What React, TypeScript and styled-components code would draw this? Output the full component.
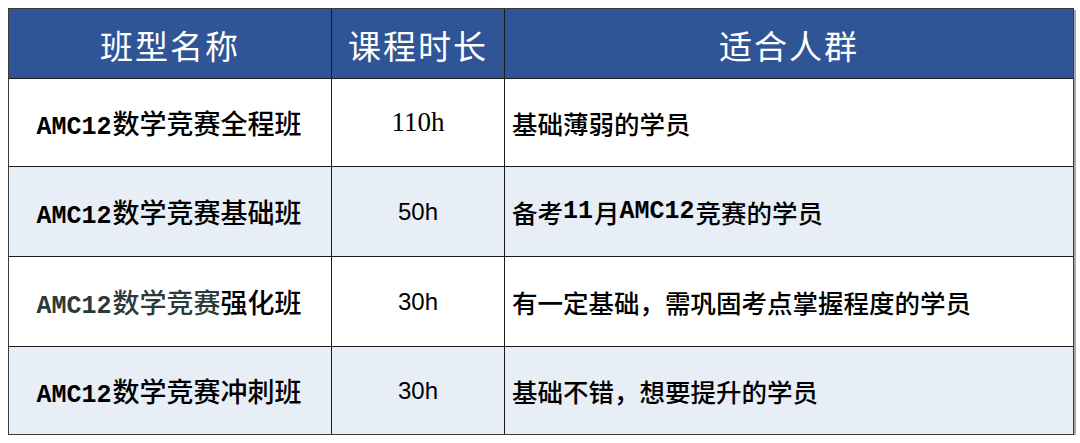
import styled, { createGlobalStyle } from "styled-components";

const GlobalStyle = createGlobalStyle`
  body {
    margin: 0;
    padding: 8px 0 0 8px;
    background: #ffffff;
    font-family: "Liberation Serif", "Noto Sans CJK SC", serif;
  }
`;

type Course = {
  name: string;
  dimPrefix?: boolean;
  hours: string;
  hoursSans?: boolean;
  audience: string;
};

const courses: Course[] = [
  { name: "全程班", hours: "110h", audience: "基础薄弱的学员" },
  { name: "基础班", hours: "50h", hoursSans: true, audience: "备考11月AMC12竞赛的学员" },
  {
    name: "强化班",
    dimPrefix: true,
    hours: "30h",
    hoursSans: true,
    audience: "有一定基础，需巩固考点掌握程度的学员",
  },
  { name: "冲刺班", hours: "30h", hoursSans: true, audience: "基础不错，想要提升的学员" },
];

const App: React.FC = () => {
  return (
    <>
      <GlobalStyle />
      <Table>
        <HeaderRow>
          <HeadCell>班型名称</HeadCell>
          <HeadCell>课程时长</HeadCell>
          <HeadCell>适合人群</HeadCell>
        </HeaderRow>
        {courses.map((c, i) => (
          <Row key={i} $striped={i % 2 === 1} $tall={i === 1 || i === 2}>
            <NameCell>
              <Prefix $dim={c.dimPrefix}>
                <Latin>AMC12</Latin>数学竞赛
              </Prefix>
              {c.name}
            </NameCell>
            <HoursCell $sans={c.hoursSans}>{c.hours}</HoursCell>
            <AudienceCell>
              {c.audience.split(/(11|AMC12)/).map((part, j) =>
                part === "11" || part === "AMC12" ? (
                  <Latin key={j}>{part}</Latin>
                ) : (
                  part
                )
              )}
            </AudienceCell>
          </Row>
        ))}
      </Table>
    </>
  );
};

const Table = styled.div`
  width: 1064px;
  border: 1px solid #3a3a3a;
  box-shadow: 2px 2px 0 #a8a8a8;
  display: flex;
  flex-direction: column;
`;

const HeaderRow = styled.div`
  display: grid;
  grid-template-columns: 322px 173px 1fr;
  height: 69px;
  background: #2f5597;
  border-bottom: 1px solid #1a1a1a;
`;

const HeadCell = styled.div`
  display: flex;
  align-items: center;
  justify-content: center;
  color: #ffffff;
  font-size: 33px;
  letter-spacing: 2px;
  padding-top: 2px;
  & + & {
    border-left: 1px solid #1a1a1a;
  }
`;

const Row = styled.div<{ $striped: boolean; $tall: boolean }>`
  display: grid;
  grid-template-columns: 322px 173px 1fr;
  height: ${(p) => (p.$tall ? 89 : 87)}px;
  background: ${(p) => (p.$striped ? "#e8eef6" : "#ffffff")};
  & + & {
    border-top: 1px solid #1a1a1a;
  }
  & > * + * {
    border-left: 1px solid #1a1a1a;
  }
`;

const Cell = styled.div`
  display: flex;
  align-items: center;
  color: #000000;
  font-size: 25.5px;
  font-weight: 500;
  font-family: "Noto Sans CJK SC", sans-serif;
`;

const NameCell = styled(Cell)`
  justify-content: center;
  padding-right: 2px;
  font-size: 27px;
`;

const Prefix = styled.span<{ $dim?: boolean }>`
  color: ${(p) => (p.$dim ? "#2c3a3a" : "inherit")};
`;

const Latin = styled.span`
  font-family: "Liberation Mono", monospace;
  font-weight: 700;
  font-size: 25px;
  margin-right: 1px;
`;

const HoursCell = styled(Cell)<{ $sans?: boolean }>`
  justify-content: center;
  font-family: ${(p) =>
    p.$sans ? '"Liberation Sans", sans-serif' : '"Liberation Serif", serif'};
  font-weight: 400;
  font-size: ${(p) => (p.$sans ? 24 : 27)}px;
`;

const AudienceCell = styled(Cell)`
  padding-left: 7px;
`;

export default App;
